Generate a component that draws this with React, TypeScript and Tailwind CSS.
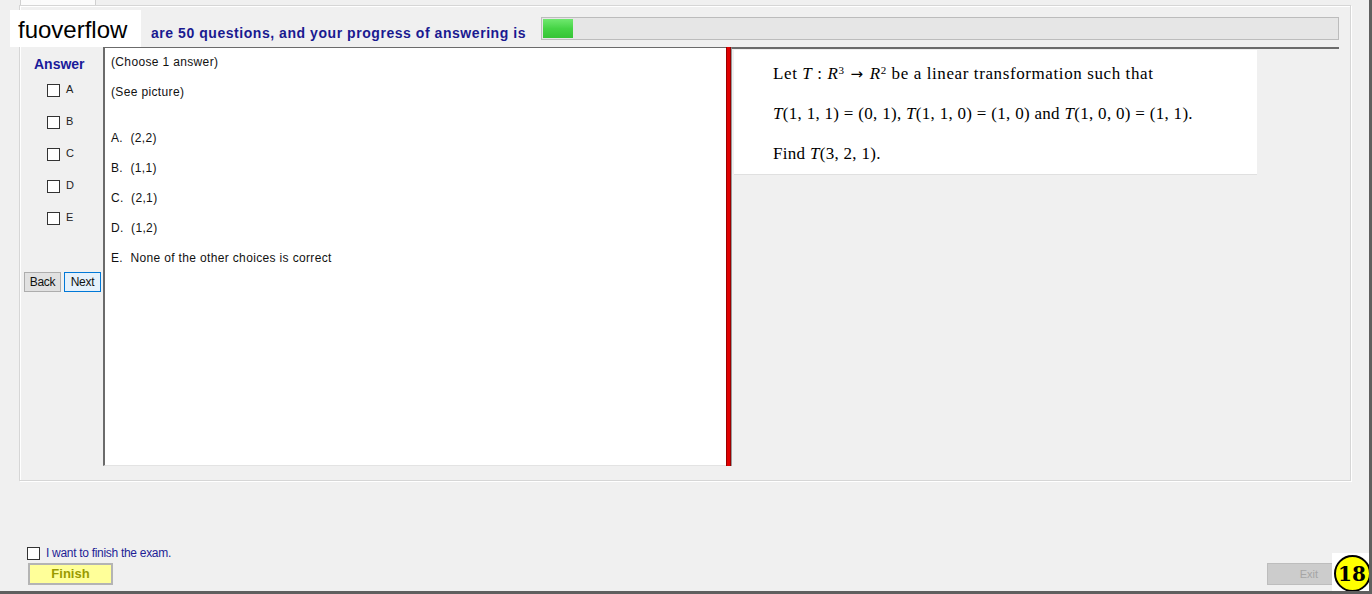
import React from "react";

const sans = { fontFamily: '"Liberation Sans", Arial, sans-serif' };
const serif = { fontFamily: '"Liberation Serif", "Times New Roman", serif' };

function Cb({ label }: { label: string }) {
  return (
    <div className="flex items-start h-[32px] pl-[24px]">
      <div className="w-[13px] h-[13px] border border-[#333] bg-white mt-[1px]" />
      <span className="ml-[6px] text-[11px] leading-[12px] text-[#222]">{label}</span>
    </div>
  );
}

const I = ({ children }: { children: React.ReactNode }) => <i>{children}</i>;
const Arrow = () => (
  <span className="mx-[6px]" style={{ fontFamily: '"DejaVu Sans", sans-serif', fontSize: "15px" }}>→</span>
);

export default function App() {
  const answers = ["A.  (2,2)", "B.  (1,1)", "C.  (2,1)", "D.  (1,2)", "E.  None of the other choices is correct"];
  return (
    <div className="relative w-[1372px] h-[594px] overflow-hidden bg-[#f0f0f0] border-r-[3px] border-b-[3px] border-[#5f5f5f]" style={sans}>
      {/* top tab */}
      <div className="h-[5px] flex">
        <div className="ml-[20px] w-[76px] h-[5px] bg-[#fbfbfb] border-l border-r border-[#d0d0d0]" />
      </div>
      {/* group frame */}
      <div className="ml-[19px] w-[1332px] h-[476px] border border-[#d6d6d6] shadow-[inset_1px_1px_0_#ffffff,1px_1px_0_#ffffff] flex flex-col">
        {/* header */}
        <div className="h-[41px] flex items-start">
          <div className="flex-1 flex justify-end pr-[15px] pt-[17px] overflow-hidden">
            <span className="text-[14px] font-bold text-[#1a1a90] whitespace-pre tracking-[0.55px]">are 50 questions, and your progress of answering is</span>
          </div>
          <div className="mt-[11px] mr-[11px] w-[798px] h-[23px] bg-[#e6e6e6] border border-[#bcbcbc] p-px">
            <div className="w-[30px] h-full bg-gradient-to-b from-[#6ee86e] via-[#45d445] to-[#36c436]" />
          </div>
        </div>
        {/* main panel */}
        <div className="ml-[3px] w-[1316px] h-[419px] flex">
          {/* left answer column */}
          <div className="w-[80px] flex flex-col">
            <div className="text-[14px] font-bold text-[#1a1a9a] pl-[11px] pt-[7px] h-[36px]">Answer</div>
            <Cb label="A" />
            <Cb label="B" />
            <Cb label="C" />
            <Cb label="D" />
            <Cb label="E" />
            <div className="flex gap-[3px] mt-[29px] pl-[1px]">
              <div className="w-[37px] h-[20px] bg-[#e1e1e1] border border-[#adadad] text-[12px] text-[#111] flex items-center justify-center tracking-[-0.3px]">Back</div>
              <div className="w-[37px] h-[20px] bg-[#e5f1fb] border border-[#0078d7] text-[12px] text-[#111] flex items-center justify-center tracking-[-0.3px]">Next</div>
            </div>
          </div>
          {/* question text */}
          <div className="w-[623px] bg-white border-l-2 border-t border-[#6b6b6b] border-b border-b-[#e3e3e3] pl-[6px] pt-[6px] text-[12px] text-[#111] tracking-[0.35px]">
            <div className="h-[30px] leading-[16px]">(Choose 1 answer)</div>
            <div className="h-[46px] leading-[16px]">(See picture)</div>
            {answers.map((a) => (
              <div key={a} className="h-[30px] leading-[16px] whitespace-pre">{a}</div>
            ))}
          </div>
          {/* red splitter */}
          <div className="w-[5px] bg-[#e00000] border-l border-r border-[#9a0000]" />
          {/* right picture panel */}
          <div className="flex-1 border-t-2 border-[#6b6b6b] border-l border-l-[#9a9a9a] pl-[2px] pt-[1px]">
            <div className="w-[523px] h-[125px] bg-white border-b border-[#e0e0e0] pl-[39px] pt-[13px] text-[17px] text-black whitespace-nowrap" style={serif}>
              <div className="h-[40px] leading-[22px] tracking-[0.6px]">
                Let <I>T</I> : <I>R</I><sup className="text-[11px]">3</sup><Arrow /><I>R</I><sup className="text-[11px]">2</sup> be a linear transformation such that
              </div>
              <div className="h-[40px] leading-[22px] tracking-[0.3px]">
                <I>T</I>(1, 1, 1) = (0, 1), <I>T</I>(1, 1, 0) = (1, 0) and <I>T</I>(1, 0, 0) = (1, 1).
              </div>
              <div className="h-[30px] leading-[22px] tracking-[0.3px]">
                Find <I>T</I>(3, 2, 1).
              </div>
            </div>
          </div>
        </div>
      </div>
      {/* bottom area */}
      <div className="pl-[27px] pt-[65px]">
        <div className="flex items-center h-[14px]">
          <div className="w-[13px] h-[13px] border border-[#333] bg-white" />
          <span className="ml-[6px] text-[12px] text-[#1e1e96] tracking-[-0.3px]">I want to finish the exam.</span>
        </div>
        <div className="flex items-start mt-[3px]">
          <div className="ml-[1px] w-[85px] h-[22px] bg-[#ffff99] border-2 border-[#b4b4b4] flex items-center justify-center text-[13px] font-bold text-[#9a9a00]">Finish</div>
          <div className="flex-1" />
          <div className="mr-[36px] w-[66px] h-[22px] bg-[#cccccc] border border-[#bdbdbd] flex items-center justify-end pr-[14px] text-[11px] text-[#a5a5a5]">Exit</div>
        </div>
      </div>
      {/* watermark overlay */}
      <div className="absolute left-[10px] top-[10px] w-[131px] h-[37px] bg-white flex items-center pl-[8px] pt-[3px] text-[24px] text-black leading-none">fuoverflow</div>
      {/* badge overlay */}
      <div className="absolute -right-[3px] -bottom-[3px] w-[40px] h-[41px] bg-white flex items-center justify-center">
        <div className="w-[37px] h-[37px] rounded-full bg-[#ffff00] border-2 border-black flex items-center justify-center text-[20px] font-bold text-black" style={{ fontFamily: '"DejaVu Serif", serif' }}>18</div>
      </div>
    </div>
  );
}
